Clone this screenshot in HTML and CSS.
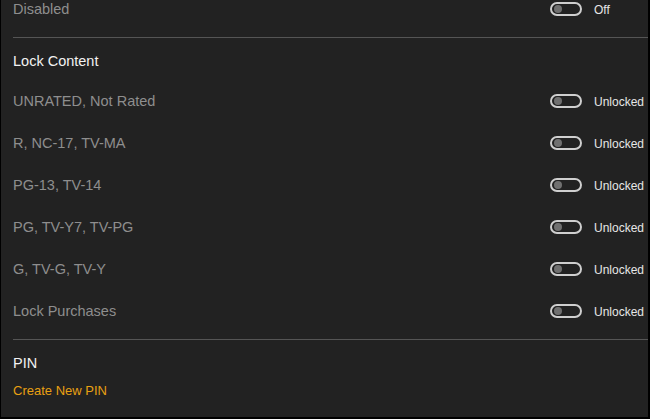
FILE: index.html
```html
<!DOCTYPE html>
<html>
<head>
<meta charset="utf-8">
<link rel="stylesheet" href="styles.css">
</head>
<body>
<div class="panel">
  <div class="row row-top">
    <span class="label">Disabled</span>
    <div class="control"><span class="toggle"><span class="knob"></span></span><span class="state">Off</span></div>
  </div>
  <div class="divider divider-top"></div>
  <div class="section-title title-lock">Lock Content</div>
  <div class="row">
    <span class="label">UNRATED, Not Rated</span>
    <div class="control"><span class="toggle"><span class="knob"></span></span><span class="state">Unlocked</span></div>
  </div>
  <div class="row">
    <span class="label">R, NC-17, TV-MA</span>
    <div class="control"><span class="toggle"><span class="knob"></span></span><span class="state">Unlocked</span></div>
  </div>
  <div class="row">
    <span class="label">PG-13, TV-14</span>
    <div class="control"><span class="toggle"><span class="knob"></span></span><span class="state">Unlocked</span></div>
  </div>
  <div class="row">
    <span class="label">PG, TV-Y7, TV-PG</span>
    <div class="control"><span class="toggle"><span class="knob"></span></span><span class="state">Unlocked</span></div>
  </div>
  <div class="row">
    <span class="label">G, TV-G, TV-Y</span>
    <div class="control"><span class="toggle"><span class="knob"></span></span><span class="state">Unlocked</span></div>
  </div>
  <div class="row">
    <span class="label">Lock Purchases</span>
    <div class="control"><span class="toggle"><span class="knob"></span></span><span class="state">Unlocked</span></div>
  </div>
  <div class="divider divider-bottom"></div>
  <div class="section-title title-pin">PIN</div>
  <a class="link">Create New PIN</a>
</div>
</body>
</html>
```
FILE: styles.css
```css
html, body {
  margin: 0;
  padding: 0;
  background: #000;
}
body {
  width: 650px;
  height: 419px;
  overflow: hidden;
  font-family: "Liberation Sans", Arial, sans-serif;
}
.panel {
  box-sizing: border-box;
  width: 650px;
  height: 419px;
  background: #222222;
  border-left: 1px solid #000;
  border-right: 2px solid #000;
  border-bottom: 2px solid #000;
  display: flex;
  flex-direction: column;
}
.row {
  height: 42px;
  display: flex;
  align-items: center;
  justify-content: space-between;
  padding-left: 12px;
}
.row-top {
  height: 18px;
}
.label {
  font-size: 14.5px;
  color: #8e8e8e;
}
.control {
  display: flex;
  align-items: center;
  gap: 12px;
}
.toggle {
  box-sizing: border-box;
  width: 32px;
  height: 14px;
  border: 2px solid #cfcfcf;
  border-radius: 7px;
  display: flex;
  align-items: center;
  padding-left: 2px;
}
.knob {
  width: 8px;
  height: 8px;
  border-radius: 50%;
  background: #707070;
}
.state {
  width: 54px;
  font-size: 12px;
  padding-top: 2px;
  color: #e6e6e6;
}
.divider {
  height: 1px;
  background: #555555;
  margin-left: 12px;
}
.divider-top {
  margin-top: 19px;
}
.divider-bottom {
  margin-top: 7px;
}
.section-title {
  font-size: 14.5px;
  color: #f2f2f2;
  padding-left: 12px;
  display: flex;
  align-items: center;
  box-sizing: border-box;
}
.title-lock {
  height: 42px;
  padding-top: 4px;
}
.title-pin {
  height: 40px;
  padding-top: 6px;
}
.link {
  font-size: 13px;
  line-height: 22px;
  color: #e8a012;
  padding-left: 12px;
}
```
